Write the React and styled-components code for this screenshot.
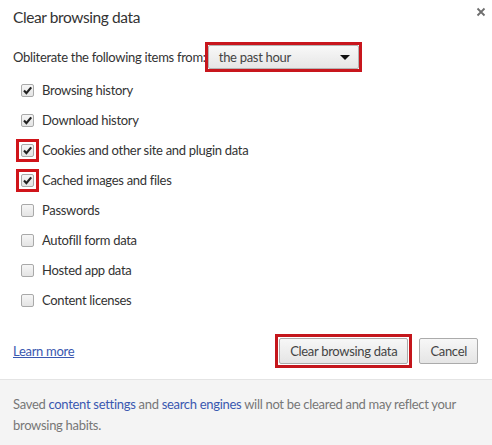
import React from "react";
import styled, { createGlobalStyle } from "styled-components";

const GlobalStyle = createGlobalStyle`
  html, body {
    margin: 0;
    padding: 0;
    background: #fff;
  }
  body {
    font-family: Lato, "Noto Sans", sans-serif;
  }
`;

const items = [
  { label: "Browsing history", checked: true },
  { label: "Download history", checked: true },
  { label: "Cookies and other site and plugin data", checked: true, marked: true },
  { label: "Cached images and files", checked: true, marked: true },
  { label: "Passwords" },
  { label: "Autofill form data" },
  { label: "Hosted app data" },
  { label: "Content licenses" },
];

const Checkbox = ({ checked, marked }) => (
  <Box $marked={marked}>
    {checked && (
      <svg width="11" height="11" viewBox="0 0 11 11">
        <path d="M2 5.6 L4.4 8.2 L9.2 2.4" fill="none" stroke="#222" strokeWidth="2.2" />
      </svg>
    )}
  </Box>
);

const App = () => {
  return (
    <Dialog>
      <GlobalStyle />
      <Main>
        <Header>
          <Title>Clear browsing data</Title>
          <Close>
            <svg width="10" height="10" viewBox="0 0 10 10">
              <path d="M1.5 1.5 L8.5 8.5 M8.5 1.5 L1.5 8.5" stroke="#6e6e6e" strokeWidth="1.8" />
            </svg>
          </Close>
        </Header>

        <RangeRow>
          <span>Obliterate the following items from:</span>
          <Select>
            <span>the past hour</span>
            <Arrow />
          </Select>
        </RangeRow>

        <List>
          {items.map((item) => (
            <Item key={item.label}>
              <Checkbox checked={item.checked} marked={item.marked} />
              <span>{item.label}</span>
            </Item>
          ))}
        </List>

        <Actions>
          <LearnMore href="#">Learn more</LearnMore>
          <Buttons>
            <Button $marked>Clear browsing data</Button>
            <Button>Cancel</Button>
          </Buttons>
        </Actions>
      </Main>

      <Footer>
        <p>
          <span>Saved </span>
          <FooterLink href="#">content settings</FooterLink>
          <span> and </span>
          <FooterLink href="#">search engines</FooterLink>
          <span> will not be cleared and may reflect your browsing habits.</span>
        </p>
      </Footer>
    </Dialog>
  );
};

export default App;

const Dialog = styled.div`
  width: 492px;
  height: 445px;
  display: flex;
  flex-direction: column;
  background: #fff;
  color: #333;
  font-size: 13px;
  letter-spacing: -0.3px;
  overflow: hidden;
`;

const Main = styled.div`
  padding: 0 13px;
  display: flex;
  flex-direction: column;
`;

const Header = styled.div`
  display: flex;
  justify-content: space-between;
  align-items: flex-start;
  height: 42px;
`;

const Title = styled.h1`
  margin: 8px 0 0;
  font-size: 15.5px;
  font-weight: 400;
  letter-spacing: -0.4px;
  color: #333;
`;

const Close = styled.div`
  margin: 6px -8px 0 0;
  width: 12px;
  height: 12px;
  display: flex;
  align-items: center;
  justify-content: center;
`;

const RangeRow = styled.div`
  display: flex;
  align-items: center;
  height: 30px;
  color: #333;
`;

const Select = styled.div`
  position: relative;
  margin-left: 2px;
  width: 151px;
  height: 24px;
  box-sizing: border-box;
  border: 1px solid #b4b4b4;
  border-radius: 2px;
  background: linear-gradient(#f8f8f8, #e6e6e6);
  display: flex;
  align-items: center;
  justify-content: space-between;
  padding: 0 8px 0 10px;
  color: #444;

  /* red annotation frame */
  &::after {
    content: "";
    position: absolute;
    inset: -4px;
    border: 3px solid #c8161d;
    pointer-events: none;
  }
`;

const Arrow = styled.span`
  width: 0;
  height: 0;
  border-left: 5px solid transparent;
  border-right: 5px solid transparent;
  border-top: 5px solid #111;
`;

const List = styled.div`
  display: flex;
  flex-direction: column;
  padding-top: 3px;
`;

const Item = styled.label`
  display: flex;
  align-items: center;
  gap: 8px;
  height: 30px;
  padding-left: 8px;
  color: #333;
`;

const Box = styled.span`
  position: relative;
  width: 13px;
  height: 13px;
  box-sizing: border-box;
  border: 1px solid #a9a9a9;
  border-radius: 2px;
  background: linear-gradient(#f6f6f6, #e4e4e4);
  display: flex;
  align-items: center;
  justify-content: center;

  &::after {
    content: "";
    display: ${(p) => (p.$marked ? "block" : "none")};
    position: absolute;
    inset: -6px;
    border: 3px solid #d0141a;
  }
`;

const Actions = styled.div`
  display: flex;
  align-items: center;
  justify-content: space-between;
  height: 52px;
  margin-top: 10px;
`;

const LearnMore = styled.a`
  color: #3a58b0;
  text-decoration: underline;
`;

const Buttons = styled.div`
  display: flex;
  gap: 11px;
  margin-right: 1px;
`;

const Button = styled.button`
  position: relative;
  height: 26px;
  padding: 0 10px;
  font-family: inherit;
  font-size: 13px;
  letter-spacing: -0.3px;
  color: #444;
  border: 1px solid #ababab;
  border-radius: 2px;
  background: linear-gradient(#f7f7f7, #e5e5e5);

  &::after {
    content: "";
    display: ${(p) => (p.$marked ? "block" : "none")};
    position: absolute;
    inset: -5px;
    border: 3px solid #c4161c;
  }
`;

const Footer = styled.div`
  flex: 1;
  margin-top: 2px;
  background: #f4f4f4;
  border-top: 1px solid #e4e4e4;
  padding: 14px 20px 0 13px;
  color: #777;
  line-height: 21px;

  p {
    margin: 0;
  }
`;

const FooterLink = styled.a`
  color: #3a58b0;
  text-decoration: none;
`;
